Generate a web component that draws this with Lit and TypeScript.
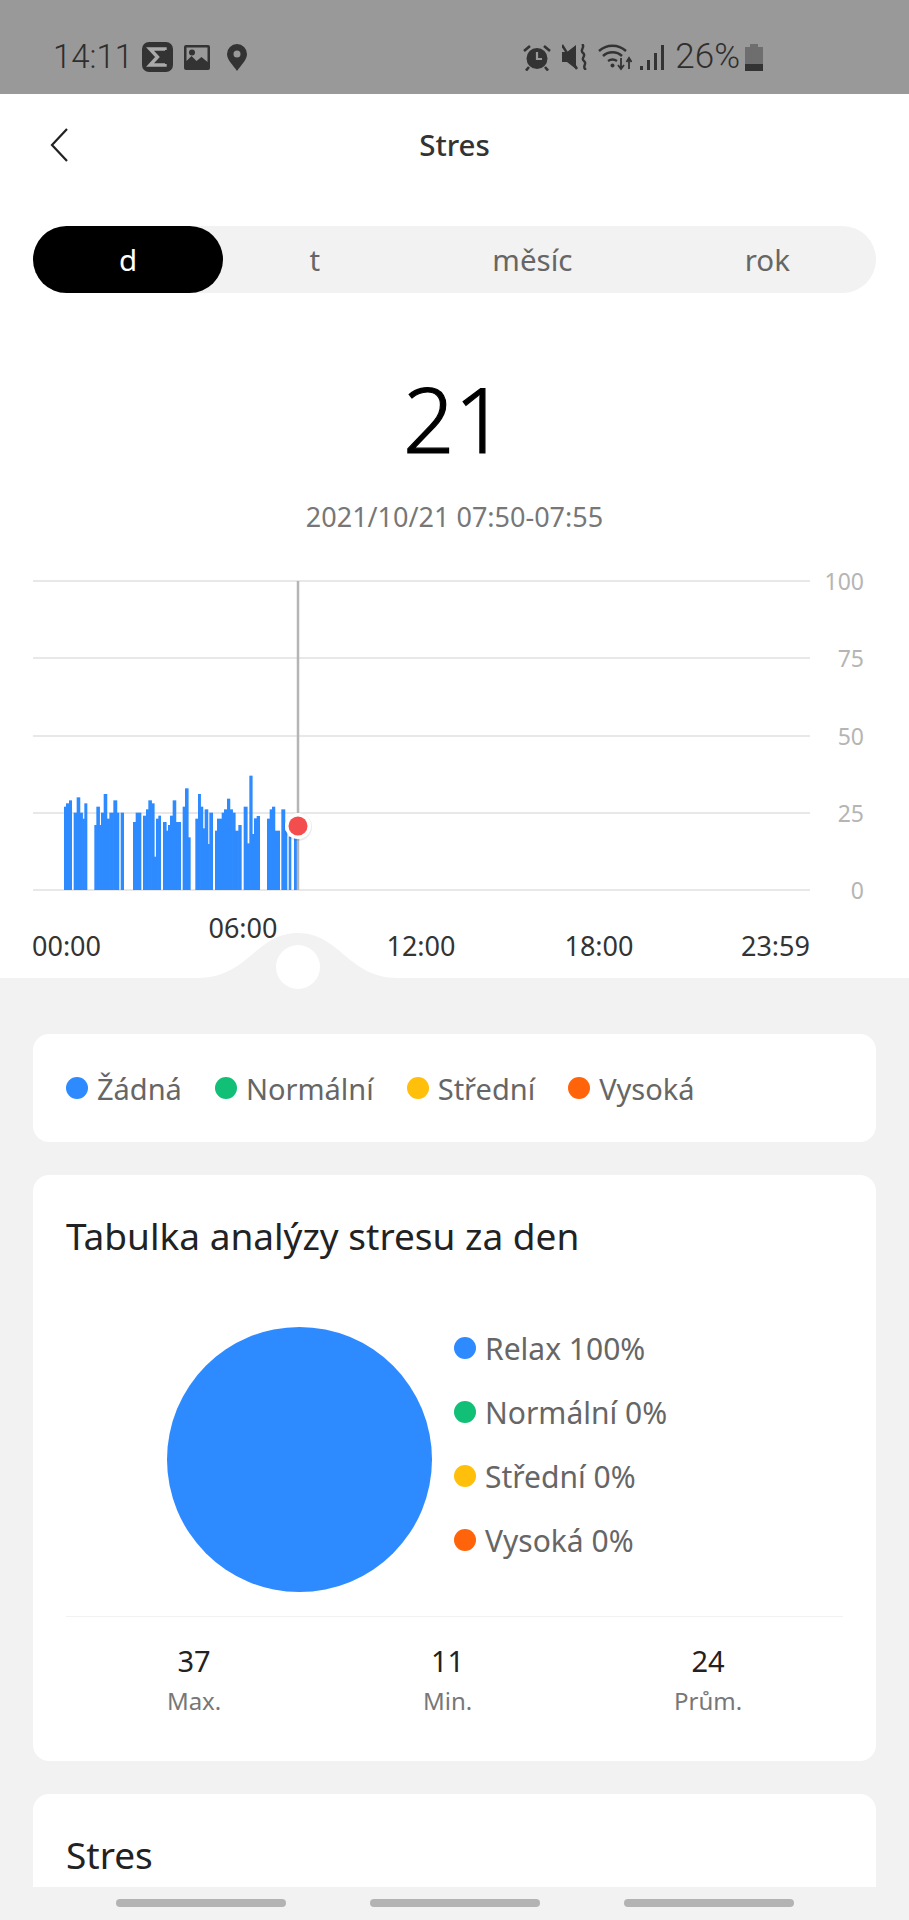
import { LitElement, html, svg, css } from "lit";
import { customElement } from "lit/decorators.js";

// [start, end, top] read off the chart, in reference pixels x3 (origin 50,760)
const BARS: [number, number, number][] = [
  [42, 48, 140], [48, 57, 130], [57, 66, 121],
  [71, 80, 158], [80, 89, 112], [89, 97, 158], [97, 103, 176], [103, 112, 130],
  [133, 139, 195], [139, 148, 140], [148, 153, 195], [153, 161, 158], [161, 170, 102],
  [170, 178, 176], [178, 190, 158], [190, 200, 121], [200, 208, 158], [212, 222, 158],
  [249, 257, 186], [257, 274, 158],
  [279, 288, 167], [288, 295, 148], [295, 304, 121], [304, 312, 130], [312, 318, 290],
  [318, 325, 176], [325, 333, 167],
  [339, 348, 186], [348, 354, 212], [354, 360, 195], [360, 368, 167], [368, 377, 121], [377, 393, 186],
  [398, 405, 140], [405, 414, 85], [414, 422, 232],
  [436, 444, 176], [444, 451, 102], [451, 458, 140], [458, 464, 205], [464, 473, 148],
  [473, 478, 252], [478, 489, 158],
  [495, 501, 212], [501, 515, 176], [515, 522, 158], [522, 531, 148], [531, 539, 116],
  [539, 547, 148], [547, 555, 158], [555, 565, 212], [565, 575, 195],
  [581, 591, 140], [591, 598, 250], [598, 606, 47], [606, 612, 222], [612, 620, 175], [620, 630, 168],
  [651, 659, 176], [659, 666, 148], [666, 674, 140], [674, 690, 212],
  [694, 704, 148], [704, 712, 212], [716, 724, 230], [732, 742, 230],
];

const GRID = [
  { y: 581, label: "100" },
  { y: 658, label: "75" },
  { y: 736, label: "50" },
  { y: 813, label: "25" },
  { y: 890, label: "0" },
];

const LEGEND = [
  { name: "Žádná", color: "#2e8bff" },
  { name: "Normální", color: "#12bf76" },
  { name: "Střední", color: "#ffbf0b" },
  { name: "Vysoká", color: "#ff640a" },
];

const SHARES = [
  { name: "Relax 100%", color: "#2e8bff" },
  { name: "Normální 0%", color: "#12bf76" },
  { name: "Střední 0%", color: "#ffbf0b" },
  { name: "Vysoká 0%", color: "#ff640a" },
];

const STATS = [
  { value: "37", label: "Max." },
  { value: "11", label: "Min." },
  { value: "24", label: "Prům." },
];

@customElement("app-root")
export class AppRoot extends LitElement {
  static styles = css`
    :host {
      display: block;
      width: 909px;
      height: 1920px;
      overflow: hidden;
      background: #f2f2f2;
      font-family: "Noto Sans", "Open Sans", sans-serif;
    }
    .main {
      height: 1887px;
      overflow: hidden;
    }

    .status {
      height: 94px;
      background: #999;
      display: flex;
      align-items: center;
      padding: 20px 0 0 53px;
      box-sizing: border-box;
      color: #2e2e2e;
    }
    .status svg {
      display: block;
      flex: none;
    }
    .time {
      font-size: 33px;
      line-height: 36px;
      width: 78px;
      font-family: Roboto, sans-serif;
      font-weight: 300;
    }
    .status-left {
      display: flex;
      align-items: center;
      gap: 11px;
    }
    .pin {
      margin-left: 6px;
    }
    .status-right {
      display: flex;
      align-items: center;
      margin-left: auto;
      margin-right: 146px;
    }
    .alarm {
      margin-right: 11px;
    }
    .mute {
      margin-right: 10px;
    }
    .wifi {
      margin-right: 8px;
    }
    .percent {
      font-size: 35px;
      line-height: 36px;
      font-family: Roboto, sans-serif;
      font-weight: 300;
      margin: 0 5px 0 11px;
    }

    .hero {
      position: relative;
      z-index: 1;
      background: #fff;
      height: 884px;
    }
    .header {
      height: 100px;
      position: relative;
      display: flex;
      align-items: center;
      justify-content: center;
      font-size: 29.5px;
      font-weight: 500;
      color: #333;
    }
    .back {
      position: absolute;
      left: 49px;
      top: 33px;
    }
    .tabs {
      display: flex;
      height: 67px;
      margin: 32px 33px 0;
      border-radius: 34px;
      background: #f2f2f2;
    }
    .tab {
      flex: 1 1 auto;
      padding: 0 80px;
      display: flex;
      align-items: center;
      justify-content: center;
      font-size: 29.5px;
      color: #666;
      border-radius: 34px;
    }
    .tab.on {
      background: #000;
      color: #fff;
    }
    .value {
      margin-top: 75px;
      text-align: center;
      font-size: 90px;
      line-height: 100px;
      font-weight: 300;
      -webkit-text-stroke: 1.2px #000;
      color: #000;
    }
    .date {
      margin-top: 31px;
      text-align: center;
      font-size: 27px;
      line-height: 36px;
      color: #777;
    }
    .chart {
      display: block;
      margin-top: 25px;
      overflow: visible;
    }
    .chart text {
      font-family: "Noto Sans", "Open Sans", sans-serif;
    }

    .body {
      padding: 56px 33px 0;
      display: flex;
      flex-direction: column;
      gap: 33px;
    }
    .card {
      background: #fff;
      border-radius: 16px;
    }
    .legend {
      height: 108px;
      padding: 0 33px;
      box-sizing: border-box;
      display: flex;
      align-items: center;
      gap: 33px;
    }
    .key {
      display: flex;
      align-items: center;
      gap: 9px;
      font-size: 29px;
      color: #666;
    }
    .dot {
      width: 22px;
      height: 22px;
      border-radius: 50%;
      flex: none;
    }
    .analysis {
      height: 586px;
      padding: 40px 33px 0;
      box-sizing: border-box;
    }
    .title {
      font-size: 37px;
      line-height: 42px;
      color: #222;
    }
    .split {
      display: flex;
      margin-top: 70px;
      padding-left: 101px;
      gap: 22px;
    }
    .pie {
      width: 265px;
      height: 265px;
      border-radius: 50%;
      background: #2e8bff;
      flex: none;
    }
    .shares {
      margin-top: -11px;
    }
    .share {
      height: 64px;
      display: flex;
      align-items: center;
      gap: 9px;
      font-size: 30px;
      color: #666;
    }
    .stats {
      display: flex;
      justify-content: space-around;
      margin-top: 24px;
      padding-top: 24px;
      border-top: 1px solid #f2f2f2;
    }
    .stat {
      text-align: center;
    }
    .stat-value {
      font-size: 29px;
      line-height: 40px;
      color: #222;
    }
    .stat-label {
      font-size: 24px;
      line-height: 39px;
      color: #777;
    }
    .more {
      height: 200px;
      padding: 40px 33px 0;
      box-sizing: border-box;
    }

    .nav {
      height: 33px;
      padding-top: 12px;
      box-sizing: border-box;
      display: flex;
      justify-content: center;
      gap: 84px;
    }
    .nav span {
      width: 170px;
      height: 8px;
      border-radius: 4px;
      background: #b3b3b3;
    }
  `;

  renderStatus() {
    return html`
      <div class="status">
        <div class="status-left">
          <span class="time">14:11</span>
          <svg width="31" height="30" viewBox="0 0 31 30">
            <rect width="31" height="30" rx="7" fill="#333" />
            <path d="M23 8V7H8l7.500 8L8 23h15v-1" fill="none" stroke="#aaa" stroke-width="3.400" />
          </svg>
          <svg width="26" height="25" viewBox="0 0 26 25">
            <path
              fill="#333"
              fill-rule="evenodd"
              d="M2 0h22a2 2 0 0 1 2 2v21a2 2 0 0 1-2 2H2a2 2 0 0 1-2-2V2a2 2 0 0 1 2-2zM2.500 2.500V16l5-5 5 5 5-4 6 5V2.500zM8 4.500a3 3 0 1 1 0 6 3 3 0 0 1 0-6z"
            />
          </svg>
          <svg class="pin" width="20" height="27" viewBox="0 0 20 27">
            <path
              fill="#333"
              fill-rule="evenodd"
              d="M10 0a10 10 0 0 1 10 10c0 6-6 11-10 17C6 21 0 16 0 10A10 10 0 0 1 10 0zm0 6.500a3.500 3.500 0 1 0 0 7 3.500 3.500 0 0 0 0-7z"
            />
          </svg>
        </div>
        <div class="status-right">
          <svg class="alarm" width="28" height="27" viewBox="0 0 28 27">
            <circle cx="14" cy="14.500" r="10.500" fill="#333" />
            <path d="M14 8v7h5" fill="none" stroke="#999" stroke-width="2.200" />
            <path d="M1 7l6-5M27 7l-6-5M6 23l-3 3.500M22 23l3 3.500" fill="none" stroke="#333" stroke-width="2.600" />
          </svg>
          <svg class="mute" width="26" height="26" viewBox="0 0 26 26">
            <path d="M0 8h5l9-7v24l-9-7H0z" fill="#333" />
            <path d="M0 1l15 24" stroke="#333" stroke-width="2.400" />
            <path d="M20 0c4 3-3 6 1 9s-3 5 1 8-3 5 2 9" fill="none" stroke="#333" stroke-width="2.400" />
          </svg>
          <svg class="wifi" width="34" height="28" viewBox="0 0 34 28">
            <path d="M1 8a20 20 0 0 1 27 0M5 13a14 14 0 0 1 19 0M10 18a8 8 0 0 1 9 0" fill="none" stroke="#333" stroke-width="2.400" />
            <circle cx="14.500" cy="22.500" r="2" fill="#333" />
            <path d="M23 15v11M20 22l3 4 3-4M31 26V16M28.500 19l2.500-4 2.500 4" fill="none" stroke="#333" stroke-width="1.800" />
          </svg>
          <svg width="24" height="25" viewBox="0 0 24 25">
            <path d="M0 21h3v4H0zM7 15h3v10H7zM14 8h3v17h-3zM21 0h3v25h-3z" fill="#333" />
          </svg>
          <span class="percent">26%</span>
          <svg width="18" height="27" viewBox="0 0 18 27">
            <path d="M5 0h8v3h5v24H0V3h5z" fill="#6e6e6e" />
            <path d="M0 20h18v7H0z" fill="#333" />
          </svg>
        </div>
      </div>
    `;
  }

  renderChart() {
    return html`
      <svg class="chart" width="909" height="418" viewBox="0 560 909 418">
        ${GRID.map(
          (g) => svg`
            <rect x="33" y=${g.y - 1} width="777" height="2" fill="#e8e8e8" />
            <text x="864" y=${g.y + 9} text-anchor="end" font-size="23" fill="#b5b5b5">${g.label}</text>
          `,
        )}
        ${BARS.map(([a, b, top], i) => {
          // neighbours overlap a little so no seam shows between them
          const joined = BARS[i + 1]?.[0] === b;
          return svg`
            <rect
              x=${50 + a / 3}
              y=${760 + top / 3}
              width=${(b - a) / 3 + (joined ? 0.6 : 0)}
              height=${890 - (760 + top / 3)}
              fill="#2e8bff"
            />
          `;
        })}
        <rect x="296.750" y="581" width="2.500" height="309" fill="#b5b5b5" />
        <circle cx="298" cy="827" r="14" fill="#000" opacity="0.08" />
        <circle cx="298" cy="826" r="13" fill="#fff" />
        <circle cx="298" cy="826" r="9.500" fill="#f44d4d" />
        <text x="32" y="956" font-size="27" fill="#333">00:00</text>
        <text x="243" y="938" font-size="27" fill="#333" text-anchor="middle">06:00</text>
        <text x="421" y="956" font-size="27" fill="#333" text-anchor="middle">12:00</text>
        <text x="599" y="956" font-size="27" fill="#333" text-anchor="middle">18:00</text>
        <text x="810" y="956" font-size="27" fill="#333" text-anchor="end">23:59</text>
        <path d="M198 978c50 0 58-45 100-45s50 45 100 45z" fill="#f2f2f2" />
        <circle cx="298" cy="967" r="22" fill="#fff" />
      </svg>
    `;
  }

  render() {
    return html`
      <div class="main">
        ${this.renderStatus()}
        <div class="hero">
          <div class="header">
            <svg class="back" width="20" height="36" viewBox="0 0 20 36">
              <path d="M18 2L3 18l15 16" fill="none" stroke="#222" stroke-width="2.200" />
            </svg>
            Stres
          </div>
          <div class="tabs">
            <div class="tab on">d</div>
            <div class="tab">t</div>
            <div class="tab">měsíc</div>
            <div class="tab">rok</div>
          </div>
          <div class="value">21</div>
          <div class="date">2021/10/21 07:50-07:55</div>
          ${this.renderChart()}
        </div>
        <div class="body">
          <div class="card legend">
            ${LEGEND.map(
              (k) => html`<div class="key"><span class="dot" style="background:${k.color}"></span>${k.name}</div>`,
            )}
          </div>
          <div class="card analysis">
            <div class="title">Tabulka analýzy stresu za den</div>
            <div class="split">
              <div class="pie"></div>
              <div class="shares">
                ${SHARES.map(
                  (s) => html`<div class="share"><span class="dot" style="background:${s.color}"></span>${s.name}</div>`,
                )}
              </div>
            </div>
            <div class="stats">
              ${STATS.map(
                (s) => html`
                  <div class="stat">
                    <div class="stat-value">${s.value}</div>
                    <div class="stat-label">${s.label}</div>
                  </div>
                `,
              )}
            </div>
          </div>
          <div class="card more">
            <div class="title">Stres</div>
          </div>
        </div>
      </div>
      <div class="nav"><span></span><span></span><span></span></div>
    `;
  }
}
